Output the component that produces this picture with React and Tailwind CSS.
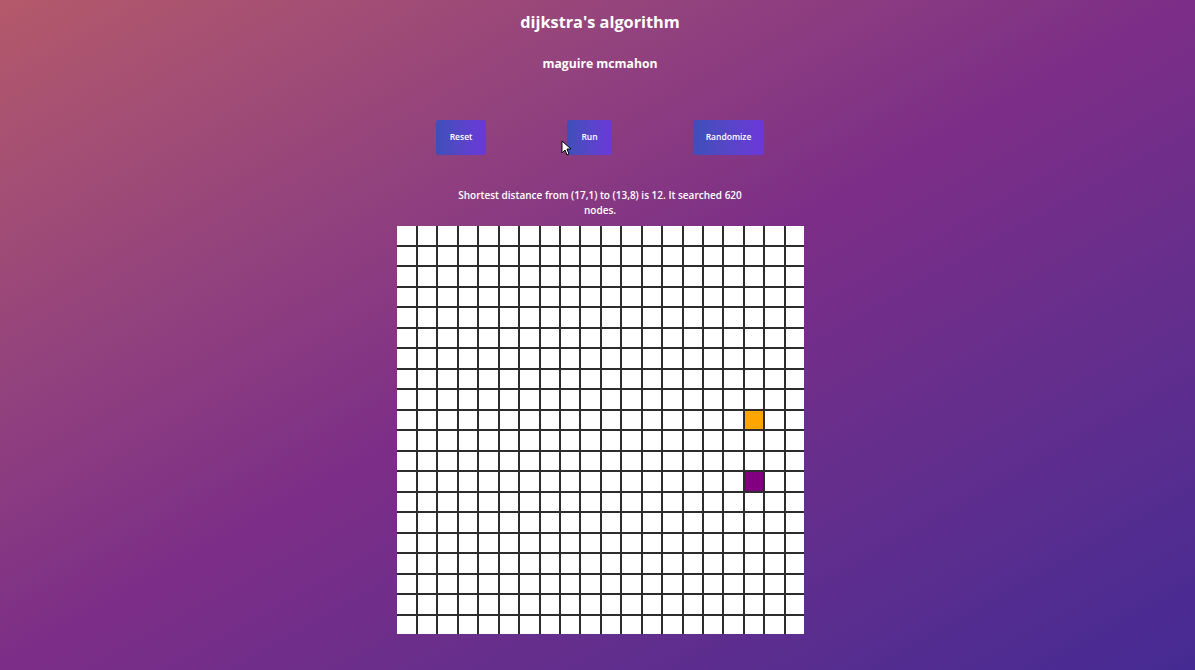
import React from "react";

const ROWS = 20;
const COLS = 20;

function Cell({ r, c }) {
  let cls = "bg-white";
  if (r === 9 && c === 17) cls = "bg-[#ffa500]";
  if (r === 12 && c === 17) cls = "bg-[#800080]";
  return <div className={cls} />;
}

export default function App() {
  const cells = [];
  for (let r = 0; r < ROWS; r++) {
    for (let c = 0; c < COLS; c++) {
      cells.push(<Cell key={r + "-" + c} r={r} c={c} />);
    }
  }
  return (
    <div
      className="relative w-[1195px] h-[670px] overflow-hidden bg-linear-to-br from-[#b4596a] via-[#7c2d87] to-[#452a93] text-white flex flex-col items-center pl-[5px]"
      style={{ fontFamily: '"Open Sans", "Noto Sans", sans-serif' }}
    >
      <h1 className="mt-[10px] text-[16.3px] leading-[24px] font-bold">dijkstra's algorithm</h1>
      <h2 className="mt-[21px] text-[12.2px] leading-[18px] font-bold">maguire mcmahon</h2>
      <div className="mt-[47px] flex items-center gap-[81px]">
        <button className="h-[35px] px-[14px] rounded-[3px] bg-linear-to-r from-[#3e4fb8] to-[#6b37d9] text-[8.5px] text-white font-semibold">
          Reset
        </button>
        <button className="h-[35px] px-[14px] rounded-[3px] bg-linear-to-r from-[#3e4fb8] to-[#6b37d9] text-[8.5px] text-white font-semibold">
          Run
        </button>
        <button className="h-[35px] px-[13px] rounded-[3px] bg-linear-to-r from-[#3e4fb8] to-[#6b37d9] text-[8.5px] text-white font-semibold">
          Randomize
        </button>
      </div>
      <p className="mt-[33px] w-[290px] text-center text-[10px] leading-[15px] font-semibold">
        Shortest distance from (17,1) to (13,8) is 12. It searched 620 nodes.
      </p>
      <div className="mt-[8px] w-[407px] h-[408px] grid grid-cols-[19px_18px_19px_18px_19px_18px_19px_18px_18px_19px_18px_19px_18px_19px_18px_18px_19px_18px_19px_18px] grid-rows-[19px_18px_19px_18px_19px_18px_19px_18px_19px_18px_19px_18px_19px_18px_19px_18px_19px_18px_19px_18px] gap-[2px] bg-[#2c2c2c]">
        {cells}
      </div>
      <svg
        className="absolute left-[561px] top-[140px]"
        width="10"
        height="16"
        viewBox="0 0 10 16"
      >
        <path d="M1 1 L1 13 L4 10 L6 15 L8 14 L6 9 L10 9 Z" fill="#fff" stroke="#000" strokeWidth="1" />
      </svg>
    </div>
  );
}
